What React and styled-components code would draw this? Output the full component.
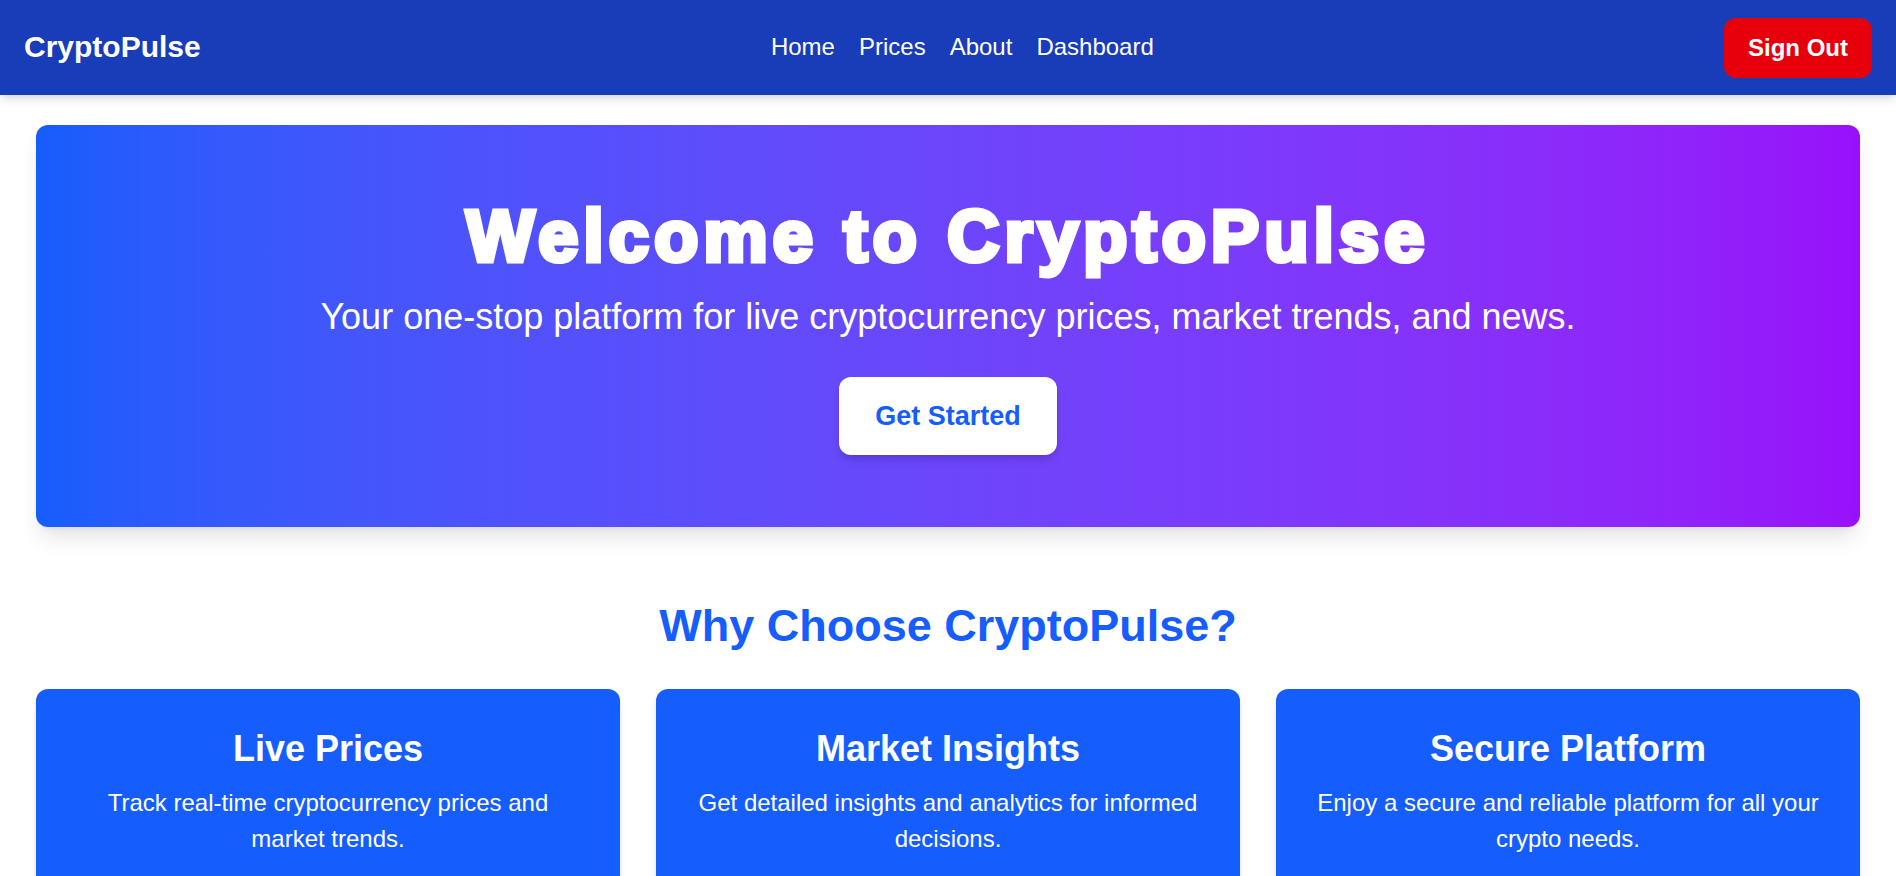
import React from "react";
import styled, { createGlobalStyle } from "styled-components";

const GlobalStyle = createGlobalStyle`
  html {
    scrollbar-width: none;
  }
  body {
    margin: 0;
    background: #ffffff;
    font-family: "Liberation Sans", Arial, sans-serif;
    color: #111827;
  }
`;

const Navbar = styled.nav`
  display: flex;
  align-items: center;
  justify-content: space-between;
  height: 95px;
  padding: 0 24px;
  box-sizing: border-box;
  background: #193cb8;
  box-shadow: 0 6px 9px -1px rgba(0, 0, 0, 0.1), 0 3px 6px -3px rgba(0, 0, 0, 0.1);
  position: relative;
  z-index: 1;
`;

const Logo = styled.div`
  color: #fff;
  font-size: 30px;
  font-weight: 700;
  margin-top: -1px;
`;

const NavLinks = styled.div`
  display: flex;
  gap: 24px;
  margin-top: -1px;
`;

const NavLink = styled.a`
  color: #fff;
  font-size: 24px;
  text-decoration: none;
  cursor: pointer;
`;

const SignOut = styled.button`
  font-family: inherit;
  font-size: 24px;
  font-weight: 700;
  line-height: 36px;
  color: #fff;
  background: #e7000b;
  border: 0;
  border-radius: 12px;
  padding: 12px 24px;
  cursor: pointer;
`;

const Main = styled.main`
  padding: 30px 36px 0;
`;

const Hero = styled.section`
  display: flex;
  flex-direction: column;
  align-items: center;
  padding: 75px 36px 72px;
  border-radius: 12px;
  background: linear-gradient(to right, #155dfc, #9810fa);
  background: linear-gradient(to right in oklab, #155dfc, #9810fa);
  color: #fff;
  text-align: center;
  box-shadow: 0 15px 22px -4px rgba(0, 0, 0, 0.1), 0 6px 9px -6px rgba(0, 0, 0, 0.1);
`;

const HeroTitle = styled.h1`
  margin: 0 0 24px;
  font-size: 72px;
  line-height: 72px;
  font-weight: 900;
  letter-spacing: 5.3px;
  -webkit-text-stroke: 5px #fff;
  paint-order: stroke fill;
`;

const HeroText = styled.p`
  margin: 0 0 39px;
  font-size: 36px;
  line-height: 42px;
`;

const StartButton = styled.button`
  font-family: inherit;
  font-size: 27px;
  line-height: 42px;
  font-weight: 700;
  color: #155dfc;
  background: #fff;
  border: 0;
  border-radius: 12px;
  padding: 18px 36px;
  box-shadow: 0 6px 9px -1px rgba(0, 0, 0, 0.12), 0 3px 6px -3px rgba(0, 0, 0, 0.1);
  cursor: pointer;
`;

const Features = styled.section`
  padding-top: 72px;
`;

const SectionTitle = styled.h2`
  margin: 0 0 36px;
  text-align: center;
  font-size: 45px;
  line-height: 54px;
  font-weight: 700;
  color: #155dfc;
`;

const CardGrid = styled.div`
  display: grid;
  grid-template-columns: repeat(3, 1fr);
  gap: 36px;
`;

const Card = styled.div`
  padding: 36px;
  border-radius: 12px;
  background: #155dfc;
  color: #fff;
  text-align: center;
  box-shadow: 0 6px 9px -1px rgba(0, 0, 0, 0.1), 0 3px 6px -3px rgba(0, 0, 0, 0.1);
`;

const CardTitle = styled.h3`
  margin: 0 0 12px;
  font-size: 36px;
  line-height: 48px;
  font-weight: 700;
`;

const CardText = styled.p`
  margin: 0;
  font-size: 24px;
  line-height: 36px;
`;

const features = [
  {
    title: "Live Prices",
    text: "Track real-time cryptocurrency prices and market trends.",
  },
  {
    title: "Market Insights",
    text: "Get detailed insights and analytics for informed decisions.",
  },
  {
    title: "Secure Platform",
    text: "Enjoy a secure and reliable platform for all your crypto needs.",
  },
];

export default function App() {
  return (
    <>
      <GlobalStyle />
      <Navbar>
        <Logo>CryptoPulse</Logo>
        <NavLinks>
          <NavLink>Home</NavLink>
          <NavLink>Prices</NavLink>
          <NavLink>About</NavLink>
          <NavLink>Dashboard</NavLink>
        </NavLinks>
        <SignOut>Sign Out</SignOut>
      </Navbar>
      <Main>
        <Hero>
          <HeroTitle>Welcome to CryptoPulse</HeroTitle>
          <HeroText>
            Your one-stop platform for live cryptocurrency prices, market trends, and news.
          </HeroText>
          <StartButton>Get Started</StartButton>
        </Hero>
        <Features>
          <SectionTitle>Why Choose CryptoPulse?</SectionTitle>
          <CardGrid>
            {features.map((f) => (
              <Card key={f.title}>
                <CardTitle>{f.title}</CardTitle>
                <CardText>{f.text}</CardText>
              </Card>
            ))}
          </CardGrid>
        </Features>
      </Main>
    </>
  );
}
